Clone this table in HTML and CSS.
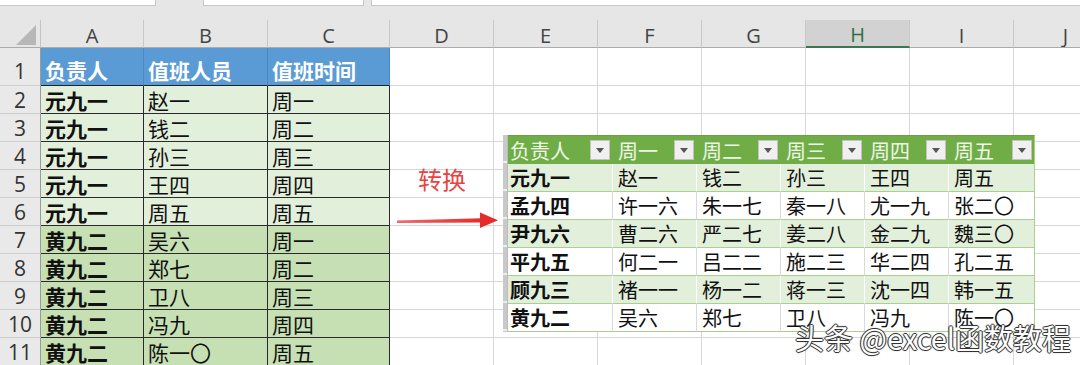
FILE: index.html
```html
<!DOCTYPE html>
<html lang="zh-CN">
<head>
<meta charset="utf-8">
<title>值班表转换</title>
<link rel="stylesheet" href="styles.css">
</head>
<body>
<div class="top">
  <div class="box b1"></div>
  <div class="box b2"></div>
  <div class="box b3"></div>
</div>
<div class="sheet">
  <div class="corner"><svg width="20" height="20" viewBox="0 0 20 20"><polygon points="20,0 20,20 0,20" fill="#b7b7b7"/></svg></div>
  <div class="ch">A</div><div class="ch">B</div><div class="ch">C</div><div class="ch">D</div><div class="ch">E</div><div class="ch">F</div><div class="ch">G</div><div class="ch sel">H</div><div class="ch">I</div><div class="ch">J</div>

  <div class="rh r1">1</div><div class="c hd">负责人</div><div class="c hd">值班人员</div><div class="c hd">值班时间</div><div></div><div></div><div></div><div></div><div></div><div></div><div></div>

  <div class="rh">2</div><div class="c g1 b">元九一</div><div class="c g1">赵一</div><div class="c g1">周一</div><div></div><div></div><div></div><div></div><div></div><div></div><div></div>
  <div class="rh">3</div><div class="c g1 b">元九一</div><div class="c g1">钱二</div><div class="c g1">周二</div><div></div><div></div><div></div><div></div><div></div><div></div><div></div>
  <div class="rh">4</div><div class="c g1 b">元九一</div><div class="c g1">孙三</div><div class="c g1">周三</div><div></div><div></div><div></div><div></div><div></div><div></div><div></div>
  <div class="rh">5</div><div class="c g1 b">元九一</div><div class="c g1">王四</div><div class="c g1">周四</div><div></div><div></div><div></div><div></div><div></div><div></div><div></div>
  <div class="rh">6</div><div class="c g1 b">元九一</div><div class="c g1">周五</div><div class="c g1">周五</div><div></div><div></div><div></div><div></div><div></div><div></div><div></div>
  <div class="rh">7</div><div class="c g2 b">黄九二</div><div class="c g2">吴六</div><div class="c g2">周一</div><div></div><div></div><div></div><div></div><div></div><div></div><div></div>
  <div class="rh">8</div><div class="c g2 b">黄九二</div><div class="c g2">郑七</div><div class="c g2">周二</div><div></div><div></div><div></div><div></div><div></div><div></div><div></div>
  <div class="rh">9</div><div class="c g2 b">黄九二</div><div class="c g2">卫八</div><div class="c g2">周三</div><div></div><div></div><div></div><div></div><div></div><div></div><div></div>
  <div class="rh">10</div><div class="c g2 b">黄九二</div><div class="c g2">冯九</div><div class="c g2">周四</div><div></div><div></div><div></div><div></div><div></div><div></div><div></div>
  <div class="rh">11</div><div class="c g2 b">黄九二</div><div class="c g2">陈一〇</div><div class="c g2">周五</div><div></div><div></div><div></div><div></div><div></div><div></div><div></div>
</div>

<div class="label">转换</div>
<svg class="arrow" width="108" height="22" viewBox="0 0 108 22">
  <defs>
    <linearGradient id="ag" x1="0" x2="1" y1="0" y2="0">
      <stop offset="0" stop-color="#ee6a6a"/>
      <stop offset="1" stop-color="#e52b2b"/>
    </linearGradient>
  </defs>
  <polygon points="1,10.6 86,8.2 86,12.6 1,13" fill="url(#ag)"/>
  <polygon points="84,2.5 102,10.2 84,18" fill="#e52b2b"/>
</svg>

<div class="ptable">
  <div class="strip"></div>
  <div class="tgrid">
    <div class="tr">
      <div class="tc th">负责人<span class="dd"></span></div>
      <div class="tc th">周一<span class="dd"></span></div>
      <div class="tc th">周二<span class="dd"></span></div>
      <div class="tc th">周三<span class="dd"></span></div>
      <div class="tc th">周四<span class="dd"></span></div>
      <div class="tc th">周五<span class="dd"></span></div>
    </div>
    <div class="tr band">
      <div class="tc b">元九一</div><div class="tc">赵一</div><div class="tc">钱二</div><div class="tc">孙三</div><div class="tc">王四</div><div class="tc">周五</div>
    </div>
    <div class="tr">
      <div class="tc b">孟九四</div><div class="tc">许一六</div><div class="tc">朱一七</div><div class="tc">秦一八</div><div class="tc">尤一九</div><div class="tc">张二〇</div>
    </div>
    <div class="tr band">
      <div class="tc b">尹九六</div><div class="tc">曹二六</div><div class="tc">严二七</div><div class="tc">姜二八</div><div class="tc">金二九</div><div class="tc">魏三〇</div>
    </div>
    <div class="tr">
      <div class="tc b">平九五</div><div class="tc">何二一</div><div class="tc">吕二二</div><div class="tc">施二三</div><div class="tc">华二四</div><div class="tc">孔二五</div>
    </div>
    <div class="tr band">
      <div class="tc b">顾九三</div><div class="tc">褚一一</div><div class="tc">杨一二</div><div class="tc">蒋一三</div><div class="tc">沈一四</div><div class="tc">韩一五</div>
    </div>
    <div class="tr">
      <div class="tc b">黄九二</div><div class="tc">吴六</div><div class="tc">郑七</div><div class="tc">卫八</div><div class="tc">冯九</div><div class="tc">陈一〇</div>
    </div>
  </div>
</div>

<div class="wm">头条 @excel函数教程</div>
</body>
</html>
```

FILE: styles.css
```css
html, body {
  margin: 0;
  padding: 0;
}
body {
  width: 1080px;
  height: 365px;
  overflow: hidden;
  background: #ffffff;
  position: relative;
  font-family: "Noto Sans CJK SC", "Noto Sans", sans-serif;
}

/* top formula strip */
.top {
  height: 20px;
  background: #e6e6e6;
  display: flex;
  align-items: flex-start;
}
.box {
  height: 6px;
  background: #ffffff;
  border: 1px solid #c6c6c6;
  border-top: 0;
  box-sizing: border-box;
}
.b1 { width: 156px; border-left: 0; }
.b2 { width: 161px; margin-left: 47px; }
.b3 { flex: 1; margin-left: 7px; border-right: 0; }

/* sheet grid */
.sheet {
  display: grid;
  grid-template-columns: 41px 103px 124px 122px repeat(7, 104px);
  grid-template-rows: 28px 38px repeat(10, 28px);
}
.sheet > div {
  box-sizing: border-box;
  border-right: 1px solid #d6d6d6;
  border-bottom: 1px solid #d6d6d6;
  display: flex;
  align-items: center;
  overflow: hidden;
  white-space: nowrap;
}
.sheet > .corner {
  background: #e6e6e6;
  border-right-color: #c4c4c4;
  border-bottom-color: #ababab;
  align-items: flex-end;
  justify-content: flex-end;
  padding: 0 4px 2px 0;
}
.corner svg { display: block; }
.sheet > .ch {
  background: #e6e6e6;
  justify-content: center;
  font-family: "Open Sans", "Noto Sans", sans-serif;
  font-size: 20px;
  color: #444444;
  border-right-color: #c8c8c8;
  border-bottom-color: #ababab;
  padding-top: 3px;
}
.sheet > .ch.sel {
  background: #d2d2d2;
  color: #2f6e4b;
  border-bottom: 2px solid #3b7553;
}
.sheet > .rh {
  background: #e9e9e9;
  justify-content: center;
  font-family: "Open Sans", "Noto Sans", sans-serif;
  font-size: 21px;
  color: #333333;
  border-right-color: #9a9a9a;
  border-bottom-color: #cfcfcf;
}
.sheet > .rh.r1 {
  align-items: flex-end;
  line-height: 28px;
}

.sheet > .c {
  font-size: 21px;
  color: #111111;
  padding-left: 4px;
  border-right-color: #2a2a2a;
  border-bottom-color: #2a2a2a;
}
.sheet > .hd {
  background: #5b9bd5;
  color: #ffffff;
  font-weight: bold;
  align-items: flex-end;
  line-height: 29px;
  border-right-color: #4d89c0;
  border-bottom-color: #222222;
}
.sheet > .g1 { background: #e2efda; }
.sheet > .g2 { background: #c6e0b4; }
.b { font-weight: bold; }

/* annotation */
.label {
  position: absolute;
  left: 418px;
  top: 163px;
  font-size: 24px;
  color: #e84444;
  line-height: 32px;
}
.arrow {
  position: absolute;
  left: 396px;
  top: 210px;
}

/* pasted result table */
.ptable {
  position: absolute;
  left: 503px;
  top: 135px;
  display: flex;
}
.strip {
  width: 5px;
  background: repeating-linear-gradient(to bottom, #c9c9c9 0, #c9c9c9 26px, #eeeeee 26px, #eeeeee 28px);
  border-right: 1px solid #bcbcbc;
  box-sizing: border-box;
}
.tgrid {
  display: grid;
  grid-template-columns: 105px 84px 84px 84px 84px 85px;
  grid-auto-rows: 28px;
  border-right: 1px solid #a9d08e;
  border-top: 1px solid #6a9f45;
}
.tr { display: contents; }
.tc {
  box-sizing: border-box;
  display: flex;
  align-items: center;
  font-size: 20px;
  color: #111111;
  padding-left: 5px;
  background: #ffffff;
  border-right: 1px solid #d9d9d9;
  border-bottom: 1px solid #a9d08e;
  white-space: nowrap;
  overflow: hidden;
}
.tr > .tc:first-child { padding-left: 2px; }
.tr > .tc:last-child { border-right: 0; }
.band > .tc {
  background: #e2efda;
  border-right-color: #ffffff;
}
.tc.th {
  background: #70ad47;
  color: #eef7e8;
  justify-content: space-between;
  padding-right: 2px;
  border-right: 1px solid #70ad47;
  border-bottom: 0;
}
.dd {
  width: 20px;
  height: 20px;
  background: #f0f0f0;
  border: 1px solid #c2c2c2;
  box-sizing: border-box;
  display: flex;
  align-items: center;
  justify-content: center;
}
.dd::after {
  content: "";
  border-left: 4px solid transparent;
  border-right: 4px solid transparent;
  border-top: 5px solid #555555;
}

/* watermark */
.wm {
  position: absolute;
  left: 795px;
  top: 318px;
  font-size: 29px;
  line-height: 38px;
  color: #ffffff;
  white-space: nowrap;
  text-shadow: -1px 0 #333, 1px 0 #333, 0 -1px #333, 0 1px #333, 0 0 2px #000;
}
```
